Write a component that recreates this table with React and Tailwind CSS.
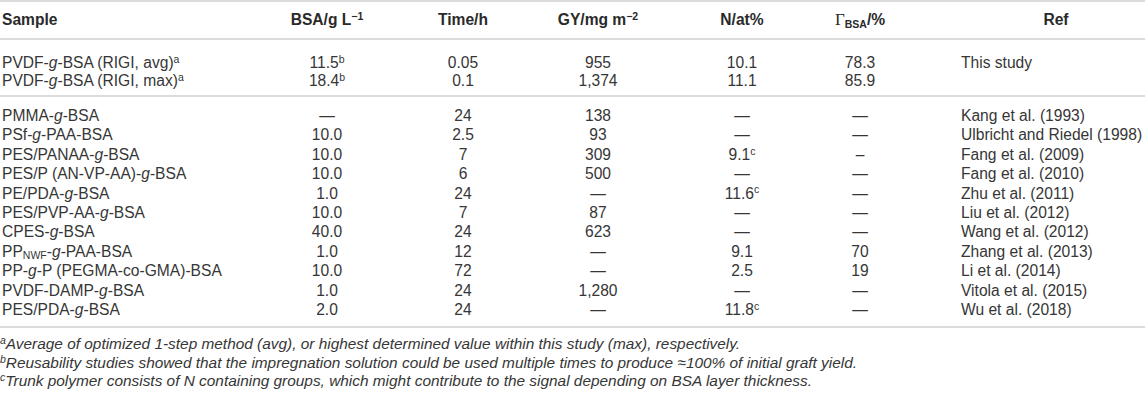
import React from "react";

const G = "grid grid-cols-[260px_134px_138px_132px_156px_80px_1fr] items-center";

function I({ children }) {
  return <i>{children}</i>;
}
function Sup({ children }) {
  return <sup className="text-[10.5px]">{children}</sup>;
}

const dash = "—";

const group1 = [
  [<>PVDF-<I>g</I>-BSA (RIGI, avg)<Sup>a</Sup></>, <>11.5<Sup>b</Sup></>, "0.05", "955", "10.1", "78.3", "This study"],
  [<>PVDF-<I>g</I>-BSA (RIGI, max)<Sup>a</Sup></>, <>18.4<Sup>b</Sup></>, "0.1", "1,374", "11.1", "85.9", ""],
];

const group2 = [
  [<>PMMA-<I>g</I>-BSA</>, dash, "24", "138", dash, dash, "Kang et al. (1993)"],
  [<>PSf-<I>g</I>-PAA-BSA</>, "10.0", "2.5", "93", dash, dash, "Ulbricht and Riedel (1998)"],
  [<>PES/PANAA-<I>g</I>-BSA</>, "10.0", "7", "309", <>9.1<Sup>c</Sup></>, "–", "Fang et al. (2009)"],
  [<>PES/P (AN-VP-AA)-<I>g</I>-BSA</>, "10.0", "6", "500", dash, dash, "Fang et al. (2010)"],
  [<>PE/PDA-<I>g</I>-BSA</>, "1.0", "24", dash, <>11.6<Sup>c</Sup></>, dash, "Zhu et al. (2011)"],
  [<>PES/PVP-AA-<I>g</I>-BSA</>, "10.0", "7", "87", dash, dash, "Liu et al. (2012)"],
  [<>CPES-<I>g</I>-BSA</>, "40.0", "24", "623", dash, dash, "Wang et al. (2012)"],
  [<>PP<sub className="text-[10.5px]">NWF</sub>-<I>g</I>-PAA-BSA</>, "1.0", "12", dash, "9.1", "70", "Zhang et al. (2013)"],
  [<>PP-<I>g</I>-P (PEGMA-co-GMA)-BSA</>, "10.0", "72", dash, "2.5", "19", "Li et al. (2014)"],
  [<>PVDF-DAMP-<I>g</I>-BSA</>, "1.0", "24", "1,280", dash, dash, "Vitola et al. (2015)"],
  [<>PES/PDA-<I>g</I>-BSA</>, "2.0", "24", dash, <>11.8<Sup>c</Sup></>, dash, "Wu et al. (2018)"],
];

function Row({ r, h }) {
  return (
    <div className={`${G} ${h}`}>
      <div className="pl-[2px] whitespace-nowrap">{r[0]}</div>
      <div className="text-center">{r[1]}</div>
      <div className="text-center">{r[2]}</div>
      <div className="text-center">{r[3]}</div>
      <div className="text-center">{r[4]}</div>
      <div className="text-center">{r[5]}</div>
      <div className="pl-[61px] whitespace-nowrap">{r[6]}</div>
    </div>
  );
}

export default function App() {
  return (
    <div className="w-[1145px] h-[413px] bg-white font-['Liberation_Sans',Arial,sans-serif] text-[15.6px] text-[#363636] overflow-hidden">
      <div className={`${G} h-[40px] border-t-2 border-b-2 border-[#dcdcdc] font-bold text-[#2a2a2a]`}>
        <div className="pl-[2px]">Sample</div>
        <div className="text-center">BSA/g L<sup className="text-[10.5px]">−1</sup></div>
        <div className="text-center">Time/h</div>
        <div className="text-center">GY/mg m<sup className="text-[10.5px]">−2</sup></div>
        <div className="text-center">N/at%</div>
        <div className="text-center whitespace-nowrap">
          <span className="font-['Liberation_Serif',serif] font-normal text-[17px]">Γ</span>
          <sub className="text-[10.5px]">BSA</sub>/%
        </div>
        <div className="pl-[67px] text-center">Ref</div>
      </div>
      <div className="pt-[11px] pb-[8px] border-b-2 border-[#dcdcdc]">
        {group1.map((r, i) => (
          <Row key={i} r={r} h="h-[18px]" />
        ))}
      </div>
      <div className="pt-[7px] pb-[9px] border-b-2 border-[#dcdcdc]">
        {group2.map((r, i) => (
          <Row key={i} r={r} h="h-[19.4px]" />
        ))}
      </div>
      <div className="pt-[7px] italic text-[15.4px] leading-[18.5px]">
        <div><sup className="text-[10.5px]">a</sup>Average of optimized 1-step method (avg), or highest determined value within this study (max), respectively.</div>
        <div><sup className="text-[10.5px]">b</sup>Reusability studies showed that the impregnation solution could be used multiple times to produce ≈100% of initial graft yield.</div>
        <div><sup className="text-[10.5px]">c</sup>Trunk polymer consists of N containing groups, which might contribute to the signal depending on BSA layer thickness.</div>
      </div>
    </div>
  );
}
